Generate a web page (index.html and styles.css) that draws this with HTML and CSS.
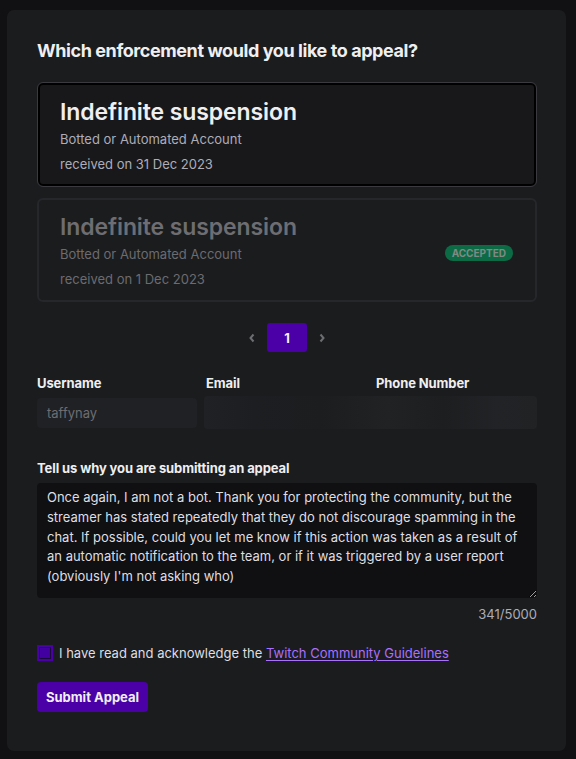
FILE: index.html
```html
<!DOCTYPE html>
<html lang="en">
<head>
<meta charset="utf-8">
<title>Appeal</title>
<link rel="stylesheet" href="styles.css">
</head>
<body>
<main class="panel">
  <h2 class="heading">Which enforcement would you like to appeal?</h2>

  <div class="enf enf-selected">
    <div class="enf-body">
      <div class="enf-title">Indefinite suspension</div>
      <div class="enf-sub">Botted or Automated Account</div>
      <div class="enf-sub">received on 31 Dec 2023</div>
    </div>
  </div>

  <div class="enf enf-disabled">
    <div class="enf-body">
      <div class="enf-title">Indefinite suspension</div>
      <div class="enf-sub">Botted or Automated Account</div>
      <div class="enf-sub">received on 1 Dec 2023</div>
    </div>
    <span class="badge">ACCEPTED</span>
  </div>

  <nav class="pager">
    <span class="arrow">
      <svg width="8" height="10" viewBox="0 0 8 10"><path d="M5.5 1.5 L2.5 5 L5.5 8.5" fill="none" stroke="currentColor" stroke-width="2"/></svg>
    </span>
    <span class="page-btn">1</span>
    <span class="arrow">
      <svg width="8" height="10" viewBox="0 0 8 10"><path d="M2.5 1.5 L5.5 5 L2.5 8.5" fill="none" stroke="currentColor" stroke-width="2"/></svg>
    </span>
  </nav>

  <div class="fields">
    <label class="label">Username</label>
    <label class="label">Email</label>
    <label class="label">Phone Number</label>
    <div class="input">taffynay</div>
    <div class="blurred"></div>
  </div>

  <label class="label reason-label">Tell us why you are submitting an appeal</label>
  <textarea class="reason">Once again, I am not a bot. Thank you for protecting the community, but the streamer has stated repeatedly that they do not discourage spamming in the chat. If possible, could you let me know if this action was taken as a result of an automatic notification to the team, or if it was triggered by a user report (obviously I'm not asking who)</textarea>
  <div class="counter">341/5000</div>

  <div class="ack">
    <span class="checkbox"><span class="checkbox-fill"></span></span>
    <span>I have read and acknowledge the <a class="link" href="#">Twitch Community Guidelines</a></span>
  </div>

  <button class="submit">Submit Appeal</button>
</main>
</body>
</html>
```

FILE: styles.css
```css
* { box-sizing: border-box; }

html, body {
  margin: 0;
  background: #111113;
}

body {
  padding: 10px 10px 8px 7px;
  font-family: Inter, "Noto Sans", "Liberation Sans", sans-serif;
  color: #efeff1;
}

.panel {
  background: #1b1c1e;
  border-radius: 7px;
  height: 741px;
  padding: 29px 29px 30px 30px;
  display: flex;
  flex-direction: column;
}

.heading {
  margin: 0 0 19px;
  font-size: 18px;
  line-height: 24px;
  font-weight: 700;
  letter-spacing: -0.42px;
  color: #efeff1;
}

.enf {
  display: flex;
  align-items: center;
  border-radius: 6px;
  padding: 13px 22px 8px 22px;
  height: 105px;
}

.enf-selected {
  border: 1px solid #3a3a3f;
  box-shadow: inset 0 0 0 2px #000;
  background: #18181b;
}

.enf-disabled {
  margin-top: 11px;
  height: 104px;
  border: 2px solid #26272a;
  padding: 12px 22px 8px 21px;
}

.enf-body { flex: 1; }

.enf-title {
  font-size: 23px;
  line-height: 30px;
  font-weight: 600;
  letter-spacing: -0.1px;
  color: #efeff1;
}

.enf-sub {
  font-size: 13px;
  line-height: 25px;
  color: #adadb8;
}

.enf-disabled .enf-title { color: #6d6d72; }
.enf-disabled .enf-sub { color: #6b6b70; }

.badge {
  background: #0c6a45;
  color: #7f8a84;
  font-size: 10px;
  font-weight: 700;
  line-height: 16px;
  padding: 0 7px;
  border-radius: 8px;
  letter-spacing: 0;
  margin-top: 2px;
}

.pager {
  margin-top: 21px;
  display: flex;
  justify-content: center;
  align-items: center;
  gap: 11px;
}

.arrow {
  width: 8px;
  display: flex;
  color: #6d6d72;
}

.page-btn {
  width: 40px;
  height: 29px;
  border-radius: 3px;
  background: #4a00a6;
  color: #efeff1;
  font-size: 13px;
  font-weight: 700;
  display: flex;
  align-items: center;
  justify-content: center;
}

.fields {
  margin-top: 23px;
  display: grid;
  grid-template-columns: 160px 1fr 1fr;
  column-gap: 9px;
  row-gap: 7px;
}

.label {
  display: block;
  font-size: 13px;
  line-height: 16px;
  font-weight: 700;
  color: #efeff1;
  letter-spacing: -0.1px;
}

.input {
  height: 30px;
  background: #202124;
  border-radius: 4px;
  padding: 0 10px;
  font-size: 13px;
  line-height: 30px;
  color: #6d6d72;
}

.blurred {
  grid-column: 2 / 4;
  margin: -2px 0 -1px -2px;
  border-radius: 4px;
  background: linear-gradient(90deg, #202124 0%, #1d1e21 15%, #1c1d1f 35%, #212224 55%, #1d1e20 72%, #222326 88%, #212224 100%);
}

.reason-label {
  margin-top: 32px;
}

.reason {
  margin-top: 7px;
  width: 500px;
  height: 115px;
  background: #101012;
  border: none;
  border-radius: 4px;
  padding: 5px 10px;
  font-family: Inter, "Noto Sans", "Liberation Sans", sans-serif;
  font-size: 13px;
  line-height: 19.8px;
  color: #dedee3;
  resize: vertical;
  outline: none;
}

.counter {
  margin-top: 7px;
  text-align: right;
  font-size: 13px;
  line-height: 18px;
  color: #adadb8;
}

.ack {
  margin-top: 21px;
  display: flex;
  align-items: center;
  gap: 6px;
  font-size: 13px;
  line-height: 18px;
  color: #dedee3;
}

.checkbox {
  width: 16px;
  height: 16px;
  border: 2px solid #4a00a6;
  padding: 1px;
  background: #1a0a3a;
  display: flex;
}

.checkbox-fill {
  flex: 1;
  background: #4200a0;
}

.link {
  color: #a970ff;
  text-decoration: underline;
  text-underline-offset: 2px;
}

.submit {
  margin-top: 20px;
  align-self: flex-start;
  width: 111px;
  height: 30px;
  background: #4a00a6;
  border: none;
  border-radius: 4px;
  color: #efeff1;
  font-family: Inter, "Noto Sans", "Liberation Sans", sans-serif;
  font-size: 13px;
  font-weight: 700;
  padding: 0;
}
```
